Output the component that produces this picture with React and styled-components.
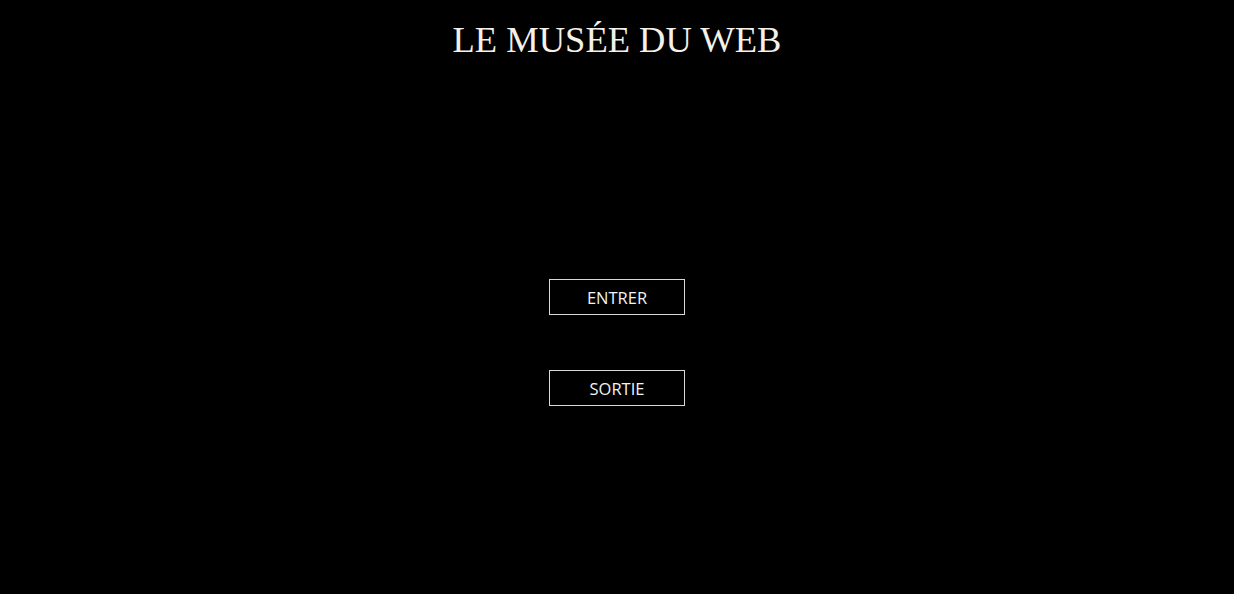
import React from "react";
import styled, { createGlobalStyle } from "styled-components";

const Global = createGlobalStyle`
  html, body { margin: 0; padding: 0; background: #000; }
  body { min-height: 594px; }
`;

const Page = styled.div`
  min-height: 594px;
  background: #000;
  display: flex;
  flex-direction: column;
  align-items: center;
`;

const Title = styled.h1`
  margin: 19px 0 0;
  font-family: "Liberation Serif", "Times New Roman", serif;
  font-weight: 400;
  font-size: 36.5px;
  line-height: 42px;
  color: #f4f0ea;
  letter-spacing: 0;
`;

const Menu = styled.nav`
  margin-top: 218px;
  display: flex;
  flex-direction: column;
  align-items: center;
  gap: 55px;
`;

const Button = styled.button`
  box-sizing: border-box;
  width: 136px;
  height: 36px;
  background: transparent;
  border: 1px solid #d8d8d8;
  color: #f2f2f2;
  font-family: "Open Sans", "Noto Sans", sans-serif;
  font-size: 16.5px;
  line-height: 20px;
  padding: 2px 0 0;
  cursor: pointer;
`;

export default function App() {
  return (
    <>
      <Global />
      <Page>
        <Title>LE MUSÉE DU WEB</Title>
        <Menu>
          <Button>ENTRER</Button>
          <Button>SORTIE</Button>
        </Menu>
      </Page>
    </>
  );
}
